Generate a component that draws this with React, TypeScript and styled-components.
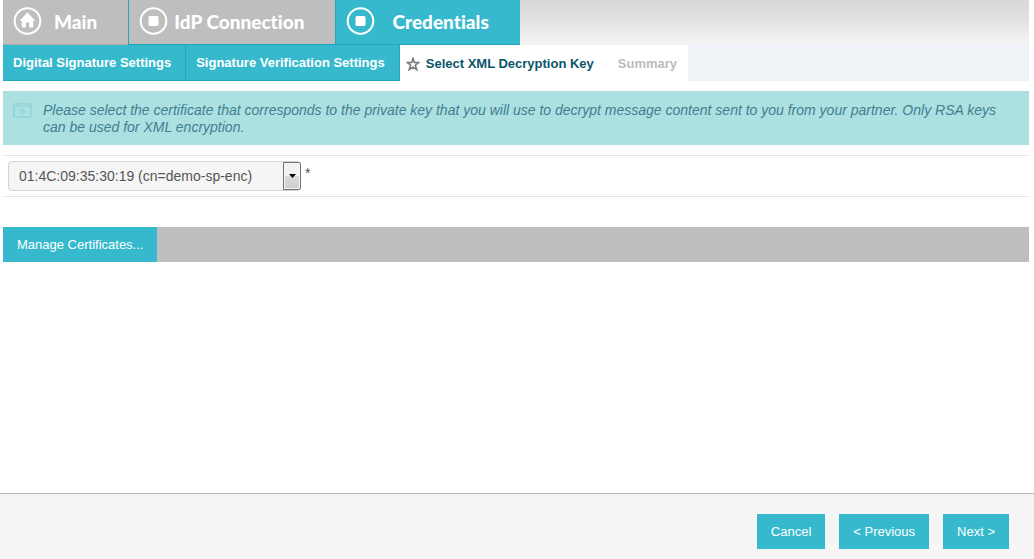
import React from 'react';
import styled, { createGlobalStyle } from 'styled-components';

const teal = '#36b9cd';
const tealEdge = '#27a5b8';

const GlobalStyle = createGlobalStyle`
  * { box-sizing: border-box; }
  body {
    margin: 0;
    background: #fff;
    font-family: "Liberation Sans", Arial, sans-serif;
    font-size: 14px;
  }
`;

const Page = styled.div`
  min-height: 100vh;
  display: flex;
  flex-direction: column;
`;

const Content = styled.main`
  flex: 1;
  padding: 0 5px 0 3px;
`;

const Breadcrumbs = styled.nav`
  display: flex;
  height: 45px;
  background: linear-gradient(#d8d8d8, #dedede 30%, #f4f4f4);
`;

const Crumb = styled.a<{ $active?: boolean; $gap: number }>`
  display: flex;
  align-items: center;
  gap: ${p => p.$gap}px;
  padding: 0 31px 2px 10px;
  background: ${p => (p.$active ? teal : '#bebebe')};
  border-bottom: 1px solid ${tealEdge};
  color: #fff;
  font: 900 19px Lato, "Open Sans", sans-serif;
  font-variant-ligatures: none;
  text-decoration: none;
  white-space: nowrap;

  & + & { border-left: 1px solid ${tealEdge}; }
  &:first-child { border-bottom-color: #aaa; }
`;

const Steps = styled.nav`
  display: flex;
  height: 36px;
  background: #eff3f8;
  font-size: 13px;
  font-weight: 700;
  white-space: nowrap;
`;

const DoneStep = styled.a`
  display: flex;
  align-items: center;
  padding: 0 14px 0 10px;
  background: ${teal};
  border: solid ${tealEdge};
  border-width: 0 1px 1px 0;
  color: #fff;
  text-decoration: none;
`;

const OpenStep = styled.span<{ $current?: boolean }>`
  display: flex;
  align-items: center;
  gap: 6px;
  padding: ${p => (p.$current ? '1px 14px 0 6px' : '1px 11px 0 10px')};
  background: #fff;
  color: ${p => (p.$current ? '#0b556b' : '#bcbcbc')};
`;

const Notice = styled.section`
  display: flex;
  gap: 11px;
  margin-top: 10px;
  padding: 11px 10px 9px;
  background: #ade1e1;
  color: #3f7f91;

  svg { flex: none; margin-top: 1px; }
  p { margin: 0; font-style: italic; line-height: 17px; }
`;

const Field = styled.div`
  display: flex;
  gap: 4px;
  height: 42px;
  margin-top: 10px;
  padding: 5px;
  border: solid #e4e4e4;
  border-width: 1px 0;
  color: #555;
`;

const Required = styled.span`
  padding-top: 4px;
`;

const SelectBox = styled.div`
  position: relative;
  width: 293px;
  height: 30px;
`;

const Select = styled.select`
  appearance: none;
  width: 100%;
  height: 100%;
  padding: 0 24px 0 10px;
  border: 1px solid #d2d2d2;
  border-radius: 4px;
  background: #f5f5f5;
  color: #555;
  font: 14px "Liberation Sans", Arial, sans-serif;
`;

const Arrow = styled.span`
  position: absolute;
  top: 1px;
  right: 0;
  bottom: 1px;
  width: 18px;
  display: grid;
  place-items: center;
  border: 1px solid #707070;
  border-radius: 0 2px 2px 0;
  background: linear-gradient(#f2f2f2 50%, #dadada 50%, #cfcfcf);
  box-shadow: inset 0 0 0 1px #f6f6f6;
  pointer-events: none;
`;

const ActionBar = styled.div`
  display: flex;
  margin-top: 30px;
  background: #bebebe;
`;

const Button = styled.button`
  height: 35px;
  padding: 0 14px;
  border: 0;
  background: ${teal};
  color: #fff;
  font: 13px "Liberation Sans", Arial, sans-serif;
  cursor: pointer;
`;

const Footer = styled.footer`
  display: flex;
  justify-content: flex-end;
  gap: 14px;
  padding: 20px 25px 10px;
  border-top: 1px solid #b9b9b9;
  background: #f5f5f5;
`;

const HomeIcon = () => (
  <svg width="29" height="28" viewBox="0 0 29 28" aria-hidden="true">
    <circle cx="14.5" cy="14" r="12.8" fill="none" stroke="#fff" strokeWidth="2" />
    <path d="M14.5 5.6 6.6 13.8h2.2V20.4h4v-5h3.4v5h4v-6.6h2.2z" fill="#fff" />
  </svg>
);

const StopIcon = () => (
  <svg width="29" height="28" viewBox="0 0 29 28" aria-hidden="true">
    <circle cx="14.5" cy="14" r="12.8" fill="none" stroke="#fff" strokeWidth="2" />
    <rect x="9.5" y="9" width="10" height="10" rx="1.5" fill="#fff" />
  </svg>
);

const StarIcon = () => (
  <svg width="14" height="14" viewBox="0 0 14 14" aria-hidden="true">
    <path
      d="M7 1.6 8.3 5.5 12.6 5.6 9.3 8.2 10.8 12.6 7 10.1 3.2 12.6 4.7 8.2 1.4 5.6 5.7 5.5z"
      fill="none"
      stroke="#737b80"
      strokeWidth="1.6"
    />
  </svg>
);

const PromptIcon = () => (
  <svg width="19" height="15" viewBox="0 0 19 15" fill="none" stroke="#97d5df" aria-hidden="true">
    <rect x="1" y="1" width="17" height="13" rx="0.8" strokeWidth="2" />
    <path d="M1 2.5h17" strokeWidth="3" />
    <path d="M2 2h1M4 2h1M6 2h11" stroke="#a9dfe2" strokeWidth="1" />
    <path d="m7.3 6 4.2 2.9-4.2 2.9" strokeWidth="2.2" />
  </svg>
);

export default function App() {
  return (
    <Page>
      <GlobalStyle />
      <Content>
        <Breadcrumbs aria-label="Breadcrumb">
          <Crumb href="#main" $gap={12}><HomeIcon />Main</Crumb>
          <Crumb href="#idp" $gap={6}><StopIcon />IdP Connection</Crumb>
          <Crumb href="#credentials" $active $gap={17}><StopIcon />Credentials</Crumb>
        </Breadcrumbs>
        <Steps aria-label="Steps">
          <DoneStep href="#signature">Digital Signature Settings</DoneStep>
          <DoneStep href="#verification">Signature Verification Settings</DoneStep>
          <OpenStep $current aria-current="step"><StarIcon />Select XML Decryption Key</OpenStep>
          <OpenStep>Summary</OpenStep>
        </Steps>
        <Notice>
          <PromptIcon />
          <p>
            Please select the certificate that corresponds to the private key that you will use to
            decrypt message content sent to you from your partner. Only RSA keys can be used for
            XML encryption.
          </p>
        </Notice>
        <Field>
          <SelectBox>
            <Select aria-label="XML decryption key" required>
              <option>01:4C:09:35:30:19 (cn=demo-sp-enc)</option>
            </Select>
            <Arrow>
              <svg width="7" height="4" viewBox="0 0 7 4" aria-hidden="true">
                <path d="M0 0h7L3.5 4z" fill="#000" />
              </svg>
            </Arrow>
          </SelectBox>
          <Required>*</Required>
        </Field>
        <ActionBar>
          <Button type="button">Manage Certificates...</Button>
        </ActionBar>
      </Content>
      <Footer>
        <Button type="button">Cancel</Button>
        <Button type="button">&lt; Previous</Button>
        <Button type="button">Next &gt;</Button>
      </Footer>
    </Page>
  );
}
